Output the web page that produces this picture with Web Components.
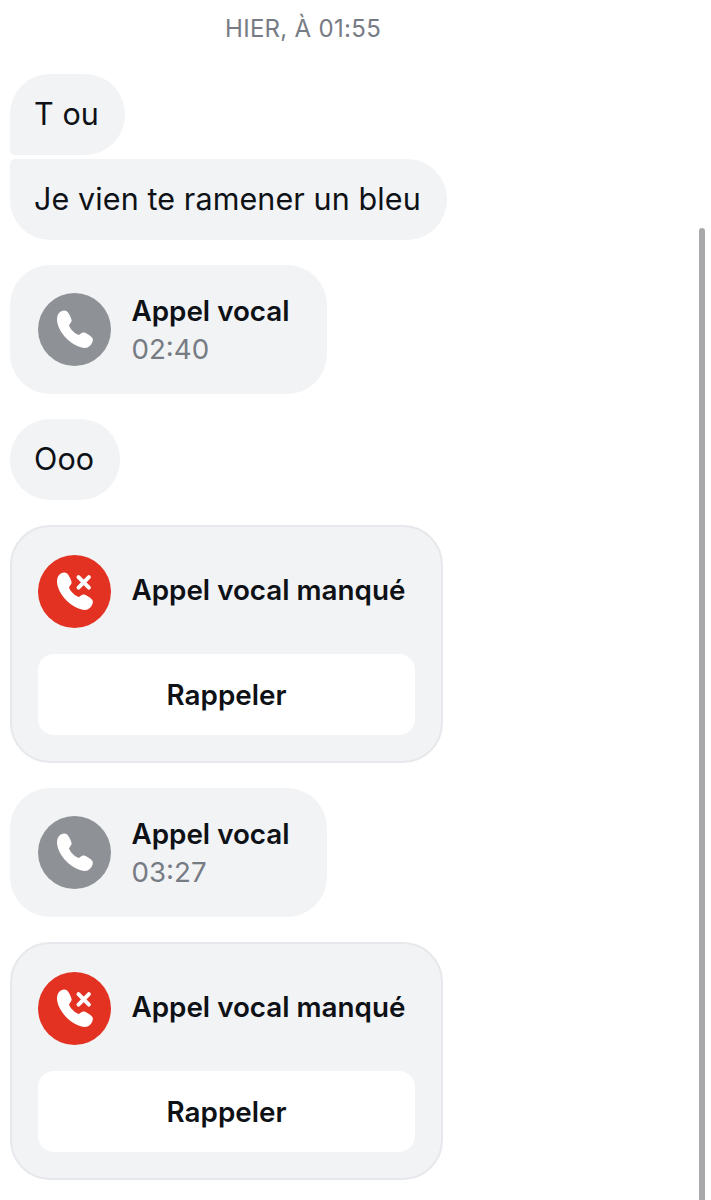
<!DOCTYPE html>
<html lang="fr">
<head>
<meta charset="utf-8">
<title>Conversation</title>
<style>
  html, body { margin: 0; background: #fff; }
  body { font-family: Inter, "Liberation Sans", sans-serif; color: #0e1116; }
</style>
</head>
<body>
<chat-thread>
  <chat-time>HIER, À 01:55</chat-time>
  <chat-group>
    <chat-bubble pos="first">T ou</chat-bubble>
    <chat-bubble pos="last">Je vien te ramener un bleu</chat-bubble>
  </chat-group>
  <call-bubble title="Appel vocal" duration="02:40"></call-bubble>
  <chat-bubble>Ooo</chat-bubble>
  <missed-call title="Appel vocal manqué" action="Rappeler"></missed-call>
  <call-bubble title="Appel vocal" duration="03:27"></call-bubble>
  <missed-call title="Appel vocal manqué" action="Rappeler"></missed-call>
</chat-thread>

<script>
// handset shape shared by both call icons
const HANDSET = 'M20 21.5C22 18 26 16.5 28.5 18C30.5 19.2 33 24.5 33.6 27C34 29 31.6 30.8 31 32.6C32 36 37 41 40.6 42C42.2 41.4 44 39 46 39.5C48.4 40 53 43 54.4 45C56 48 53 53 49.5 54.5C45 56 36 53 29 46C21 38 17 28 20 21.5Z';

class ChatThread extends HTMLElement {
  constructor() {
    super();
    this.attachShadow({ mode: 'open' });
    this.shadowRoot.innerHTML = `
      <style>
        :host { display: block; position: relative; height: 1200px; overflow: hidden; }
        .list { display: flex; flex-direction: column; align-items: flex-start; gap: 25px; padding: 0 10px; }
        .scrollbar {
          position: absolute; left: 699px; top: 228px; bottom: -8px; width: 6px;
          border-radius: 3px; background: #a9a9ab;
        }
      </style>
      <div class="list"><slot></slot></div>
      <div class="scrollbar"></div>
    `;
  }
}

class ChatTime extends HTMLElement {
  constructor() {
    super();
    this.attachShadow({ mode: 'open' });
    this.shadowRoot.innerHTML = `
      <style>
        :host {
          display: block; align-self: stretch; height: 49px; margin-right: -10px; margin-left: -10px;
          padding: 14px 0 0 225px; box-sizing: border-box;
          font-size: 24px; line-height: 30px; color: #767b84; letter-spacing: 0.3px;
        }
      </style>
      <slot></slot>
    `;
  }
}

class ChatGroup extends HTMLElement {
  constructor() {
    super();
    this.attachShadow({ mode: 'open' });
    this.shadowRoot.innerHTML = `
      <style>
        :host { display: flex; flex-direction: column; align-items: flex-start; gap: 4px; }
      </style>
      <slot></slot>
    `;
  }
}

class ChatBubble extends HTMLElement {
  constructor() {
    super();
    this.attachShadow({ mode: 'open' });
    this.shadowRoot.innerHTML = `
      <style>
        :host {
          display: block; box-sizing: border-box; height: 81px; padding: 0 26px 0 24px;
          border-radius: 40px; background: #f2f3f5;
          font-size: 30.5px; line-height: 79px; letter-spacing: 0.1px; color: #0e1116;
        }
        :host([pos="first"]) { border-bottom-left-radius: 5px; }
        :host([pos="last"]) { border-top-left-radius: 5px; }
      </style>
      <slot></slot>
    `;
  }
}

class CallIcon extends HTMLElement {
  constructor() {
    super();
    this.attachShadow({ mode: 'open' });
    const missed = this.hasAttribute('missed');
    this.shadowRoot.innerHTML = `
      <style>
        :host { display: block; width: 73px; height: 73px; flex: none; }
        svg { display: block; }
      </style>
      <svg width="73" height="73" viewBox="0 0 73 73">
        <circle cx="36.5" cy="36.5" r="36.5" fill="${missed ? '#e33122' : '#8e9196'}"/>
        <path d="${HANDSET}" fill="#fff"/>
        ${missed ? '<path d="M40.5 22.2L50.9 32.6M50.9 22.2L40.5 32.6" stroke="#fff" stroke-width="4" stroke-linecap="round" fill="none"/>' : ''}
      </svg>
    `;
  }
}

class CallBubble extends HTMLElement {
  constructor() {
    super();
    this.attachShadow({ mode: 'open' });
    this.shadowRoot.innerHTML = `
      <style>
        :host {
          display: flex; align-items: center; gap: 20.5px; box-sizing: border-box;
          height: 129px; padding: 0 37px 0 28px; border-radius: 40px; background: #f2f3f5;
        }
        .text { padding-top: 1px; }
        .title { font-size: 27.8px; font-weight: 600; line-height: 37px; color: #0e1116; }
        .duration { font-size: 27.7px; line-height: 38px; color: #767b84; }
      </style>
      <call-icon></call-icon>
      <div class="text">
        <div class="title">${this.getAttribute('title')}</div>
        <div class="duration">${this.getAttribute('duration')}</div>
      </div>
    `;
  }
}

class MissedCall extends HTMLElement {
  constructor() {
    super();
    this.attachShadow({ mode: 'open' });
    this.shadowRoot.innerHTML = `
      <style>
        :host {
          display: block; box-sizing: border-box; width: 433px; height: 238px;
          padding: 28px 26px 26px; border: 2px solid #e6e8eb; border-radius: 40px; background: #f2f3f5;
        }
        .head { display: flex; align-items: center; gap: 20.5px; }
        .title { font-size: 27.8px; font-weight: 600; line-height: 37px; margin-top: -3px; color: #0e1116; }
        button {
          display: block; width: 100%; height: 81px; margin-top: 26px; padding: 1px 0 0;
          border: 0; border-radius: 16px; background: #fff;
          font: 600 27.8px Inter, "Liberation Sans", sans-serif; color: #0e1116;
        }
      </style>
      <div class="head">
        <call-icon missed></call-icon>
        <div class="title">${this.getAttribute('title')}</div>
      </div>
      <button type="button">${this.getAttribute('action')}</button>
    `;
  }
}

customElements.define('chat-thread', ChatThread);
customElements.define('chat-time', ChatTime);
customElements.define('chat-group', ChatGroup);
customElements.define('chat-bubble', ChatBubble);
customElements.define('call-icon', CallIcon);
customElements.define('call-bubble', CallBubble);
customElements.define('missed-call', MissedCall);
</script>
</body>
</html>
